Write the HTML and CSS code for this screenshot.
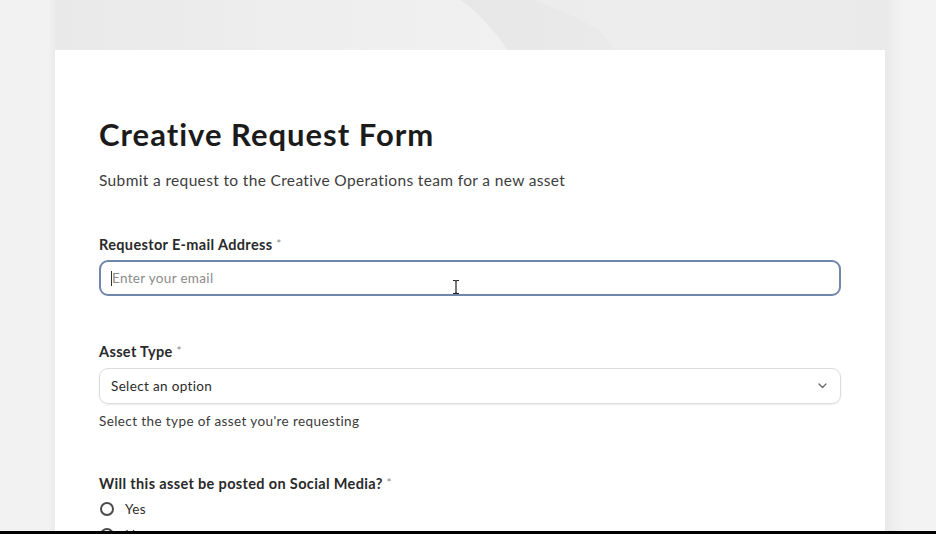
FILE: index.html
```html
<!DOCTYPE html>
<html lang="en">
<head>
<meta charset="utf-8">
<title>Creative Request Form</title>
<link rel="stylesheet" href="styles.css">
</head>
<body>
<div class="viewport">
  <div class="stage">
    <div class="sheet">
      <div class="banner">
        <svg class="banner-art" viewBox="0 0 829 50" preserveAspectRatio="none" aria-hidden="true">
          <defs>
            <linearGradient id="bandL" x1="0" y1="0" x2="1" y2="0">
              <stop offset="0" stop-color="#e9e9e9"/>
              <stop offset="0.3" stop-color="#eeeeee"/>
              <stop offset="0.5" stop-color="#f0f0f0"/>
              <stop offset="1" stop-color="#f3f3f3"/>
            </linearGradient>
            <linearGradient id="bandR" x1="0" y1="0" x2="1" y2="0">
              <stop offset="0" stop-color="#e7e7e7"/>
              <stop offset="0.5" stop-color="#ebebeb"/>
              <stop offset="1" stop-color="#e3e3e3"/>
            </linearGradient>
          </defs>
          <rect x="0" y="0" width="829" height="50" fill="url(#bandL)"/>
          <path d="M405 0 C 425 14, 440 32, 452 50 L 829 50 L 829 0 Z" fill="url(#bandR)"/>
          <path d="M476 0 C 500 8, 525 18, 545 32 L 560 50 L 829 50 L 829 0 Z" fill="#eeeeee" opacity="0.6"/>
        </svg>
      </div>
      <div class="sheet-body">
        <h1 class="form-title">Creative Request Form</h1>
        <p class="form-intro">Submit a request to the Creative Operations team for a new asset</p>

        <div class="field">
          <div class="field-label">Requestor E-mail Address <span class="req">*</span></div>
          <div class="text-input is-focused">
            <span class="caret"></span><span class="placeholder">Enter your email</span>
            <svg class="ibeam" width="8" height="16" viewBox="0 0 8 16" aria-hidden="true">
              <path d="M1 1.5 H3 Q4 1.5 4 2.5 V13.5 Q4 14.5 3 14.5 H1 M7 1.5 H5 Q4 1.5 4 2.5 M4 13.5 Q4 14.5 5 14.5 H7" fill="none" stroke="#222" stroke-width="1.2"/>
            </svg>
          </div>
        </div>

        <div class="field">
          <div class="field-label">Asset Type <span class="req">*</span></div>
          <div class="select-input">
            <span class="select-value">Select an option</span>
            <svg class="chevron" width="9" height="6" viewBox="0 0 9 6" aria-hidden="true">
              <path d="M1 1 L4.5 4.5 L8 1" fill="none" stroke="#666" stroke-width="1.3" stroke-linecap="round" stroke-linejoin="round"/>
            </svg>
          </div>
          <div class="field-help">Select the type of asset you're requesting</div>
        </div>

        <div class="field">
          <div class="field-label">Will this asset be posted on Social Media? <span class="req">*</span></div>
          <div class="choices">
            <label class="choice"><span class="radio"></span><span>Yes</span></label>
            <label class="choice"><span class="radio"></span><span>No</span></label>
          </div>
        </div>
      </div>
    </div>
  </div>
  <div class="frame-edge"></div>
</div>
</body>
</html>
```

FILE: styles.css
```css
* {
  box-sizing: border-box;
}

html,
body {
  margin: 0;
  padding: 0;
  height: 100%;
}

body {
  font-family: Lato, "Open Sans", "Liberation Sans", sans-serif;
  color: #1d1d1d;
  background: #f3f3f3;
}

.viewport {
  height: 534px;
  display: flex;
  flex-direction: column;
  overflow: hidden;
}

.stage {
  flex: 1;
  min-height: 0;
  overflow: hidden;
  display: flex;
  justify-content: flex-start;
  padding-left: 55px;
  background:
    linear-gradient(to right, #f2f2f2 0, #f2f2f2 48px, #ebebeb 55px, transparent 55px),
    linear-gradient(to right, transparent 884px, #e9e9e9 885px, #efefef 895px, #f3f3f3 905px);
}

.sheet {
  width: 830px;
  flex: none;
  background: #ffffff;
  align-self: flex-start;
}

.banner {
  height: 50px;
  background: #ececec;
}

.banner-art {
  display: block;
  width: 100%;
  height: 50px;
}

.sheet-body {
  padding: 66px 44px 0 44px;
}

.form-title {
  margin: 0;
  font-size: 31px;
  line-height: 36px;
  font-weight: 700;
  color: #1b1b1b;
  letter-spacing: 1px;
}

.form-intro {
  margin: 18px 0 0;
  font-size: 15.5px;
  line-height: 20px;
  color: #3d3d3d;
  letter-spacing: 0.35px;
}

.field {
  margin-top: 44px;
}

.field + .field {
  margin-top: 45px;
}

.field:last-child {
  margin-top: 43px;
}

.field-label {
  font-size: 14.5px;
  line-height: 20px;
  font-weight: 700;
  color: #2a2a2a;
  letter-spacing: 0.35px;
}

.req {
  font-weight: 400;
  color: #8a8a8a;
  font-size: 12px;
  vertical-align: 2px;
}

.text-input {
  position: relative;
  margin-top: 5px;
  height: 36px;
  border-radius: 9px;
  border: 1px solid #d8d8d8;
  display: flex;
  align-items: center;
  padding: 0 11px;
  font-size: 13.5px;
  letter-spacing: 0.33px;
}

.text-input.is-focused {
  border: 2px solid #7086aa;
  padding-left: 10px;
}

.caret {
  width: 1px;
  height: 15px;
  background: #333;
}

.placeholder {
  color: #8b8b8b;
}

.ibeam {
  position: absolute;
  left: 351px;
  top: 17px;
}

.select-input {
  margin-top: 6px;
  height: 36px;
  border-radius: 9px;
  border: 1px solid #dcdcdc;
  box-shadow: 0 1px 2px rgba(0, 0, 0, 0.08);
  display: flex;
  align-items: center;
  justify-content: space-between;
  padding: 0 13px 0 11px;
  font-size: 13.5px;
  letter-spacing: 0.35px;
  color: #2b2b2b;
}

.chevron {
  display: block;
}

.field-help {
  margin-top: 8px;
  font-size: 13.5px;
  line-height: 18px;
  color: #3a3a3a;
  letter-spacing: 0.4px;
}

.choices {
  margin-top: 5px;
  display: flex;
  flex-direction: column;
  gap: 6px;
}

.choice {
  display: flex;
  align-items: center;
  height: 20px;
  font-size: 13.5px;
  letter-spacing: 0.4px;
  color: #2d2d2d;
}

.radio {
  width: 14px;
  height: 14px;
  border-radius: 50%;
  border: 2px solid #4a4a4a;
  margin-left: 1px;
  margin-right: 11px;
}

.frame-edge {
  height: 3px;
  flex: none;
  background: #000;
}
```
